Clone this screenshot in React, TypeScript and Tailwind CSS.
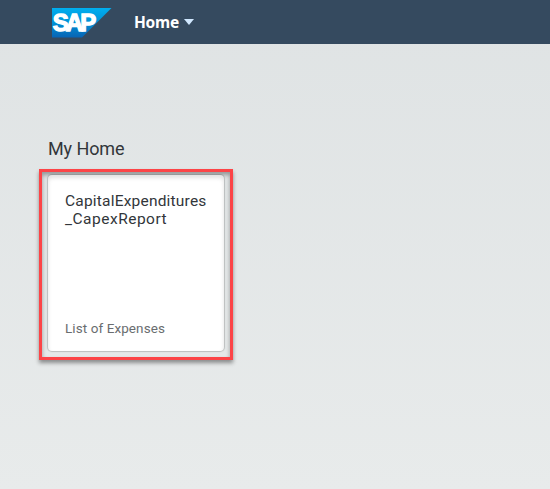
function SapLogo() {
  return (
    <svg width="60" height="30" viewBox="0 0 60 30" role="img" aria-label="SAP" className="block">
      <defs>
        <linearGradient id="sapBlue" x1="0" y1="0" x2="0" y2="1">
          <stop offset="0" stopColor="#00aeef" />
          <stop offset="0.5" stopColor="#0091d6" />
          <stop offset="1" stopColor="#0864b4" />
        </linearGradient>
      </defs>
      <path d="M0 0H59.5L30 29.5H0Z" fill="url(#sapBlue)" />
      <text
        x="0.7"
        y="23.3"
        fontSize="24"
        fontWeight="700"
        letterSpacing="-2.9"
        fill="#fff"
        stroke="#fff"
        strokeWidth="1.3"
        fontFamily="'Liberation Sans', sans-serif"
      >
        SAP
      </text>
    </svg>
  );
}

function ShellBar() {
  return (
    <header className="flex h-11 items-center bg-[#354a5f] pl-[52px]">
      <div className="pt-px">
        <SapLogo />
      </div>
      <button className="ml-[22px] flex items-center text-white">
        <span className="w-[45px] pb-px text-left font-['Noto_Sans',sans-serif] text-[15.5px] leading-5 font-bold tracking-[-0.25px]">Home</span>
        <svg width="10" height="6" viewBox="0 0 10 6" className="ml-[5px] block">
          <path d="M0 0H10L5 6Z" fill="#d1e8ff" />
        </svg>
      </button>
    </header>
  );
}

function Tile({ title, subtitle }: { title: string[]; subtitle: string }) {
  return (
    <article className="flex h-44 w-44 flex-col justify-between rounded-[4px] bg-white px-[17px] pt-[17px] pb-[14px] shadow-[0_0_1px_1px_rgba(0,0,0,0.18),inset_0_3px_4px_rgba(0,0,0,0.12)]">
      <h3 className="text-[15.5px] leading-[18px] tracking-[0.2px] text-[#32363a]">
        {title.map((line) => (
          <span key={line} className="block whitespace-nowrap last:tracking-[0.5px]">{line}</span>
        ))}
      </h3>
      <p className="text-[13.5px] leading-[18px] tracking-[0.08px] text-[#6a6d70]">{subtitle}</p>
    </article>
  );
}

export default function App() {
  return (
    <div className="flex h-[489px] w-[550px] flex-col overflow-hidden bg-linear-to-b from-[#dfe3e4] to-[#e8ebeb] font-[Roboto,sans-serif]">
      <ShellBar />
      <main className="pt-[93px] pl-[39px]">
        <h2 className="pl-[9px] text-[18px] leading-6 tracking-[-0.1px] text-[#32363a]">My Home</h2>
        <div className="mt-2 h-[191px] w-[194px] border-3 border-[#fc4447] pt-[3px] pl-[6px] shadow-[0px_3px_4px_rgba(0,0,0,0.4),inset_0px_3px_4px_rgba(0,0,0,0.35)]">
          <Tile title={["CapitalExpenditures", "_CapexReport"]} subtitle="List of Expenses" />
        </div>
      </main>
    </div>
  );
}
